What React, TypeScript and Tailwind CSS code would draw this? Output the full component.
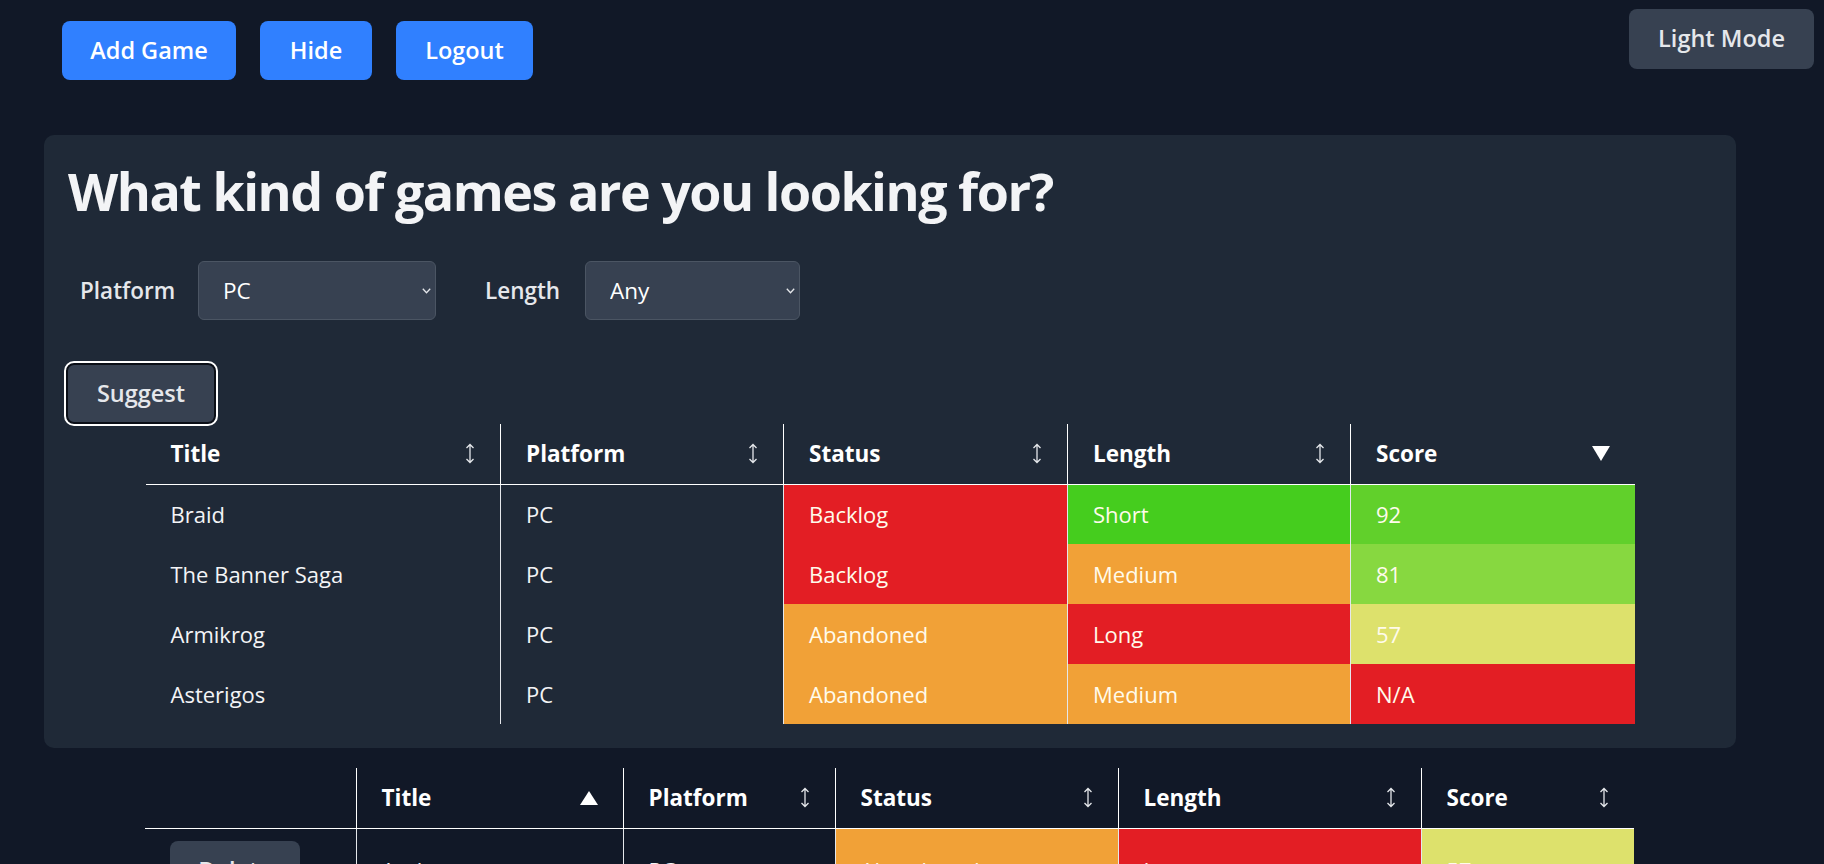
import { useState } from 'react';

type Row = {
  title: string;
  platform: string;
  status: string;
  statusBg: string;
  length: string;
  lengthBg: string;
  score: string;
  scoreBg: string;
};

const suggested: Row[] = [
  { title: 'Braid', platform: 'PC', status: 'Backlog', statusBg: 'bg-[#e31e24]', length: 'Short', lengthBg: 'bg-[#45cd1e]', score: '92', scoreBg: 'bg-[#61d02b]' },
  { title: 'The Banner Saga', platform: 'PC', status: 'Backlog', statusBg: 'bg-[#e31e24]', length: 'Medium', lengthBg: 'bg-[#f1a137]', score: '81', scoreBg: 'bg-[#87d840]' },
  { title: 'Armikrog', platform: 'PC', status: 'Abandoned', statusBg: 'bg-[#f1a137]', length: 'Long', lengthBg: 'bg-[#e31e24]', score: '57', scoreBg: 'bg-[#dde16c]' },
  { title: 'Asterigos', platform: 'PC', status: 'Abandoned', statusBg: 'bg-[#f1a137]', length: 'Medium', lengthBg: 'bg-[#f1a137]', score: 'N/A', scoreBg: 'bg-[#e31e24]' },
];

const library: Row[] = [
  { title: 'Anthem', platform: 'PC', status: 'Abandoned', statusBg: 'bg-[#f1a137]', length: 'Long', lengthBg: 'bg-[#e31e24]', score: '57', scoreBg: 'bg-[#dde16c]' },
];

// sort indicator: both ways, or a filled triangle for the active column
const SortIcon = ({ dir }: { dir?: 'asc' | 'desc' }) => {
  if (dir === 'desc')
    return (
      <svg width="18" height="15" viewBox="0 0 18 15" className="shrink-0">
        <polygon points="0,0 18,0 9,15" fill="#ffffff" />
      </svg>
    );
  if (dir === 'asc')
    return (
      <svg width="18" height="14" viewBox="0 0 18 14" className="shrink-0">
        <polygon points="9,0 18,14 0,14" fill="#ffffff" />
      </svg>
    );
  return (
    <svg width="10" height="21" viewBox="0 0 10 21" className="shrink-0">
      <path d="M5 1.5V19.5M1.5 5L5 1.5L8.5 5M1.5 16L5 19.5L8.5 16" fill="none" stroke="#e5e7eb" strokeWidth="1.3" />
    </svg>
  );
};

const Chevron = () => (
  <svg width="9" height="6" viewBox="0 0 9 6" className="pointer-events-none absolute right-[5px] top-1/2 -translate-y-1/2">
    <path d="M0.8 0.8L4.5 4.8L8.2 0.8" fill="none" stroke="#e5e7eb" strokeWidth="1.3" />
  </svg>
);

const App = () => {
  const [dark, setDark] = useState(true);

  return (
    <div className="h-screen overflow-hidden bg-[#111827] text-white font-['Open_Sans',sans-serif]">
      {/* top bar */}
      <div className="flex items-start justify-between pl-[62px] pr-[10px] pt-[9px]">
        <div className="mt-[12px] flex gap-[24px]">
          <button className="h-[59px] w-[174px] rounded-[8px] bg-[#3080ff] text-[23.5px] font-semibold">Add Game</button>
          <button className="h-[59px] w-[112px] rounded-[8px] bg-[#3080ff] text-[23.5px] font-semibold">Hide</button>
          <button className="h-[59px] w-[137px] rounded-[8px] bg-[#3080ff] text-[23.5px] font-semibold">Logout</button>
        </div>
        <button
          onClick={() => setDark(!dark)}
          className="h-[60px] w-[185px] rounded-[8px] bg-[#374151] text-[23.5px] font-semibold text-[#e5e7eb]"
        >
          Light Mode
        </button>
      </div>

      {/* suggestion panel */}
      <div className="ml-[44px] mt-[55px] w-[1692px] rounded-[10px] bg-[#1f2937] px-[24px] pt-[28px] pb-[24px]">
        <h1 className="h-[55px] text-[52px] font-bold leading-[55px] tracking-[-1.5px] text-[#f3f4f6]">
          What kind of games are you looking for?
        </h1>

        <div className="mt-[43px] flex items-center pl-[12px]">
          <label className="w-[94px] text-[22.5px] font-semibold text-[#e5e7eb]">Platform</label>
          <div className="relative ml-[24px]">
            <select className="h-[59px] w-[238px] appearance-none rounded-[6px] border border-[#4b5563] bg-[#374151] pl-[24px] text-[22.5px] text-white outline-none">
              <option>PC</option>
            </select>
            <Chevron />
          </div>
          <label className="ml-[49px] w-[75px] text-[22.5px] font-semibold text-[#e5e7eb]">Length</label>
          <div className="relative ml-[25px]">
            <select className="h-[59px] w-[215px] appearance-none rounded-[6px] border border-[#4b5563] bg-[#374151] pl-[24px] text-[22.5px] text-white outline-none">
              <option>Any</option>
            </select>
            <Chevron />
          </div>
        </div>

        <button className="mt-[43px] ml-[-2px] h-[61px] w-[150px] rounded-[8px] border-2 border-[#0b0f17] bg-[#374151] text-[23.5px] font-semibold text-[#e5e7eb] outline-2 outline-white">
          Suggest
        </button>

        <table className="mx-auto w-[1489px] table-fixed border-collapse text-[22px]">
          <thead>
            <tr className="text-[22.5px]">
              <th className="h-[60px] w-[355px] border-b border-white px-[25px] text-left font-bold">
                <div className="flex items-center justify-between">Title<SortIcon /></div>
              </th>
              <th className="h-[60px] w-[283px] border-b border-l border-white px-[25px] text-left font-bold">
                <div className="flex items-center justify-between">Platform<SortIcon /></div>
              </th>
              <th className="h-[60px] w-[284px] border-b border-l border-white px-[25px] text-left font-bold">
                <div className="flex items-center justify-between">Status<SortIcon /></div>
              </th>
              <th className="h-[60px] w-[283px] border-b border-l border-white px-[25px] text-left font-bold">
                <div className="flex items-center justify-between">Length<SortIcon /></div>
              </th>
              <th className="h-[60px] w-[284px] border-b border-l border-white px-[25px] text-left font-bold">
                <div className="flex items-center justify-between">Score<SortIcon dir="desc" /></div>
              </th>
            </tr>
          </thead>
          <tbody>
            {suggested.map((g) => (
              <tr key={g.title}>
                <td className="h-[60px] px-[25px] text-[#f3f4f6]">{g.title}</td>
                <td className="h-[60px] border-l border-[#e5e7eb] px-[25px] text-[#f3f4f6]">{g.platform}</td>
                <td className={`h-[60px] border-l border-[#e5e7eb] px-[25px] text-[#fffbeb] ${g.statusBg}`}>{g.status}</td>
                <td className={`h-[60px] border-l border-[#e5e7eb] px-[25px] text-[#fffbeb] ${g.lengthBg}`}>{g.length}</td>
                <td className={`h-[60px] border-l border-[#e5e7eb] px-[25px] text-[#fffbeb] ${g.scoreBg}`}>{g.score}</td>
              </tr>
            ))}
          </tbody>
        </table>
      </div>

      {/* full library */}
      <table className="mt-[20px] ml-[145px] w-[1489px] table-fixed border-collapse text-[22px]">
        <thead>
          <tr className="text-[22.5px]">
            <th className="h-[60px] w-[211px] border-b border-white" />
            <th className="h-[60px] w-[267px] border-b border-l border-white px-[25px] text-left font-bold">
              <div className="flex items-center justify-between">Title<SortIcon dir="asc" /></div>
            </th>
            <th className="h-[60px] w-[212px] border-b border-l border-white px-[25px] text-left font-bold">
              <div className="flex items-center justify-between">Platform<SortIcon /></div>
            </th>
            <th className="h-[60px] w-[283px] border-b border-l border-white px-[25px] text-left font-bold">
              <div className="flex items-center justify-between">Status<SortIcon /></div>
            </th>
            <th className="h-[60px] w-[303px] border-b border-l border-white px-[25px] text-left font-bold">
              <div className="flex items-center justify-between">Length<SortIcon /></div>
            </th>
            <th className="h-[60px] w-[213px] border-b border-l border-white px-[25px] text-left font-bold">
              <div className="flex items-center justify-between">Score<SortIcon /></div>
            </th>
          </tr>
        </thead>
        <tbody>
          {library.map((g) => (
            <tr key={g.title}>
              <td className="px-[25px] py-[12px]">
                <button className="h-[60px] w-[130px] rounded-[8px] bg-[#374151] text-[23.5px] font-semibold text-[#e5e7eb]">Delete</button>
              </td>
              <td className="border-l border-[#e5e7eb] px-[25px] text-[#f3f4f6]">{g.title}</td>
              <td className="border-l border-[#e5e7eb] px-[25px] text-[#f3f4f6]">{g.platform}</td>
              <td className={`border-l border-[#e5e7eb] px-[25px] text-[#fffbeb] ${g.statusBg}`}>{g.status}</td>
              <td className={`border-l border-[#e5e7eb] px-[25px] text-[#fffbeb] ${g.lengthBg}`}>{g.length}</td>
              <td className={`border-l border-[#e5e7eb] px-[25px] text-[#fffbeb] ${g.scoreBg}`}>{g.score}</td>
            </tr>
          ))}
        </tbody>
      </table>
    </div>
  );
};

export default App;
